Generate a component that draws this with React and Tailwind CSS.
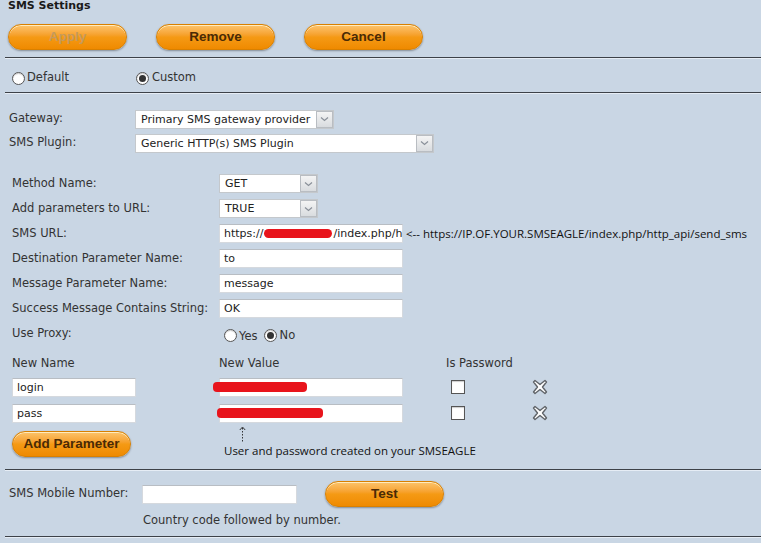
import React from 'react';

const OrangeButton = ({ children, disabled }) => (
  <button
    className={`h-[26px] w-[119px] rounded-full border border-[#d98000] bg-gradient-to-b from-[#fcc46a] via-[#f59a14] to-[#ef8a00] shadow-[0_1px_2px_rgba(0,0,0,0.35),inset_0_1px_0_rgba(255,240,200,0.9)] font-['Liberation_Sans',Arial,sans-serif] text-[13.5px] font-bold ${disabled ? 'text-[#c59a5c]' : 'text-[#4a2a05]'}`}
  >
    {children}
  </button>
);

const Select = ({ value, width }) => (
  <div className={`flex h-[19px] ${width} border border-[#c4c8cc] bg-white`}>
    <div className="flex-1 pl-[5px] text-[11px] leading-[17px] text-[#222]">{value}</div>
    <div className="flex w-[17px] items-center justify-center border border-[#b9bdc2] bg-gradient-to-b from-[#f4f4f4] to-[#d9dcdf]">
      <svg width="9" height="6" viewBox="0 0 9 6">
        <path d="M1 1.5 L4.5 4.5 L8 1.5" fill="none" stroke="#8a9099" strokeWidth="1.2" />
      </svg>
    </div>
  </div>
);

const Input = ({ children, width = 'w-[184px]' }) => (
  <div className={`relative h-[19px] ${width} overflow-visible whitespace-nowrap border border-[#d5d9de] border-t-[#b8bdc3] bg-white pl-[4px] text-[11px] leading-[17px] text-[#222]`}>
    {children}
  </div>
);

const Radio = ({ checked }) => (
  <span className="inline-flex h-[13px] w-[13px] items-center justify-center rounded-full border border-[#555] bg-white shadow-[inset_0_1px_1px_rgba(0,0,0,0.2)]">
    {checked && <span className="h-[7px] w-[7px] rounded-full bg-[#333]" />}
  </span>
);

const Row = ({ label, children }) => (
  <div className="flex h-[25px] items-center">
    <div className="w-[207px]">{label}</div>
    {children}
  </div>
);

const XIcon = () => (
  <svg width="16" height="16" viewBox="0 0 16 16">
    <path
      d="M3 1.5 L8 5.5 L13 1.5 L14.5 3 L10.5 8 L14.5 13 L13 14.5 L8 10.5 L3 14.5 L1.5 13 L5.5 8 L1.5 3 Z"
      fill="#fff"
      stroke="#5f6368"
      strokeWidth="1.4"
      strokeLinejoin="round"
    />
  </svg>
);

const Line = () => <div className="ml-[5px] border-t border-[#3d4248] shadow-[0_1px_0_#e6edf5]" />;

export default function App() {
  return (
    <div className="min-h-screen bg-[#c9d6e4] font-['DejaVu_Sans',Verdana,sans-serif] text-[11.5px] text-[#333]">
      <div className="h-[13px] pl-[8px] text-[11px] font-bold leading-[12px] text-[#1a1a1a]">SMS Settings</div>

      <div className="mt-[11px] flex gap-[29px] pl-[8px]">
        <OrangeButton disabled>Apply</OrangeButton>
        <OrangeButton>Remove</OrangeButton>
        <OrangeButton>Cancel</OrangeButton>
      </div>

      <div className="mt-[7px]">
        <Line />
      </div>

      <div className="flex h-[34px] items-center pl-[12px] pt-[6px]">
        <div className="flex w-[124px] items-center gap-[2px]">
          <Radio />
          <span>Default</span>
        </div>
        <div className="flex items-center gap-[3px]">
          <Radio checked />
          <span>Custom</span>
        </div>
      </div>

      <Line />

      <div className="pt-[14px] pl-[9px]">
        <div className="flex h-[24px] items-center">
          <div className="w-[126px]">Gateway:</div>
          <Select value="Primary SMS gateway provider" width="w-[199px]" />
        </div>
        <div className="flex h-[24px] items-center">
          <div className="w-[126px]">SMS Plugin:</div>
          <Select value="Generic HTTP(s) SMS Plugin" width="w-[299px]" />
        </div>
      </div>

      <div className="mt-[16px] pl-[12px]">
        <Row label="Method Name:">
          <Select value="GET" width="w-[99px]" />
        </Row>
        <Row label="Add parameters to URL:">
          <Select value="TRUE" width="w-[99px]" />
        </Row>
        <Row label="SMS URL:">
          <Input>
            <span className="flex">
              https://
              <span className="mx-[1px] mt-[4px] inline-block h-[9px] w-[68px] shrink-0 rounded-full bg-[#e8141c]" />
              /index.php/h
            </span>
          </Input>
          <span className="ml-[3px] font-['Open_Sans',sans-serif] text-[11.5px] text-[#111]">
            &lt;-- https://IP.OF.YOUR.SMSEAGLE/index.php/http_api/send_sms
          </span>
        </Row>
        <Row label="Destination Parameter Name:">
          <Input>to</Input>
        </Row>
        <Row label="Message Parameter Name:">
          <Input>message</Input>
        </Row>
        <Row label="Success Message Contains String:">
          <Input>OK</Input>
        </Row>
        <Row label="Use Proxy:">
          <div className="ml-[5px] mt-[4px] flex items-center">
            <Radio />
            <span className="ml-[2px] mt-[2px]">Yes</span>
            <span className="ml-[6px]">
              <Radio checked />
            </span>
            <span className="ml-[3px]">No</span>
          </div>
        </Row>

        <div className="mt-[8px] flex h-[20px] items-center">
          <div className="w-[207px]">New Name</div>
          <div className="w-[227px]">New Value</div>
          <div>Is Password</div>
        </div>

        {[
          { name: 'login', w: 'w-[94px]', off: 'ml-[-11px]' },
          { name: 'pass', w: 'w-[106px]', off: 'ml-[-7px]' },
        ].map((p) => (
          <div key={p.name} className="flex h-[26px] items-center">
            <div className="w-[207px]">
              <Input width="w-[124px]">{p.name}</Input>
            </div>
            <Input>
              <span className={`${p.off} mt-[3px] block h-[10px] ${p.w} rounded-[4px] bg-[#e8141c]`} />
            </Input>
            <span className="ml-[48px] inline-block h-[14px] w-[14px] border border-[#555] bg-white shadow-[inset_0_1px_1px_rgba(0,0,0,0.2)]" />
            <span className="ml-[67px]">
              <XIcon />
            </span>
          </div>
        ))}

        <div className="flex">
          <div className="w-[212px] pt-[5px]">
            <OrangeButton>Add Parameter</OrangeButton>
          </div>
          <div className="flex flex-col font-['Open_Sans',sans-serif] text-[11.5px] text-[#111]">
            <div className="ml-[15px] flex h-[17px] w-[7px] flex-col items-center">
              <svg width="7" height="16" viewBox="0 0 7 16">
                <path d="M0.8 4 L3.5 1 L6.2 4" fill="none" stroke="#222" strokeWidth="0.9" />
                <path d="M3.5 2 L3.5 16" fill="none" stroke="#222" strokeWidth="0.9" strokeDasharray="1.5 1.5" />
              </svg>
            </div>
            <div className="leading-[16px]">User and password created on your SMSEAGLE</div>
          </div>
        </div>
      </div>

      <div className="mt-[10px]">
        <Line />
      </div>

      <div className="flex h-[38px] items-center pl-[9px] pt-[10px]">
        <div className="w-[133px]">SMS Mobile Number:</div>
        <Input width="w-[155px]" />
        <div className="ml-[28px]">
          <OrangeButton>Test</OrangeButton>
        </div>
      </div>
      <div className="pl-[143px] pt-[5px] leading-[14px]">Country code followed by number.</div>

      <div className="mt-[9px]">
        <Line />
      </div>
    </div>
  );
}
